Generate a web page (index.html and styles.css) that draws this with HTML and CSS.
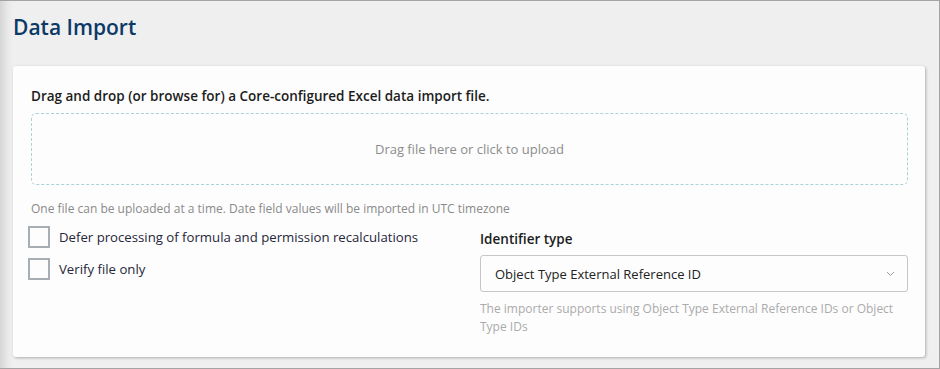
FILE: index.html
```html
<!DOCTYPE html>
<html>
<head>
    <title>Data Import</title>
    <meta name="viewport" content="width=device-width, initial-scale=1">
    <link rel="stylesheet" href="styles.css">
</head>
<body>
    <div class="window">
        <h1>Data Import</h1>

        <div class="card">
            <label class="field-label">Drag and drop (or browse for) a Core-configured Excel data import file.</label>
            <div class="dropzone">Drag file here or click to upload</div>
            <div class="hint">One file can be uploaded at a time. Date field values will be imported in UTC timezone</div>

            <div class="options">
                <div class="checks">
                    <label class="check"><span class="box"></span>Defer processing of formula and permission recalculations</label>
                    <label class="check"><span class="box"></span>Verify file only</label>
                </div>
                <div class="identifier">
                    <label class="field-label">Identifier type</label>
                    <div class="select">
                        <span>Object Type External Reference ID</span>
                        <svg class="chevron" width="9" height="6" viewBox="0 0 9 6"><path d="M1 1l3.5 3.5L8 1" fill="none" stroke="#a0a0a0" stroke-width="1"/></svg>
                    </div>
                    <div class="help">The importer supports using Object Type External Reference IDs or Object Type IDs</div>
                </div>
            </div>
        </div>
    </div>
</body>
</html>
```

FILE: styles.css
```css
html, body {
    margin: 0;
    padding: 0;
}
body {
    font-family: "Open Sans", Lato, sans-serif;
    background: #efefef;
}
.window {
    box-sizing: border-box;
    height: 369px;
    border: 1px solid #a4a4a4;
    border-left: none;
    padding: 0 14px 0 13px;
    background: linear-gradient(to right, #d6d6d6 0, #e9e9e9 8px, #efefef 13px);
}
h1 {
    margin: 0;
    padding: 12px 0 0;
    height: 65px;
    box-sizing: border-box;
    font-size: 21px;
    line-height: 28px;
    font-weight: 600;
    color: #0c3966;
}
.card {
    background: #fdfdfd;
    border-radius: 3px;
    box-shadow: 1px 1px 3px rgba(0,0,0,0.28);
    padding: 21px 17px 23px 18px;
    height: 291px;
    box-sizing: border-box;
}
.field-label {
    display: block;
    font-size: 13.5px;
    line-height: 18px;
    font-weight: 600;
    color: #1c1c1c;
}
.dropzone {
    margin-top: 8px;
    height: 72px;
    box-sizing: border-box;
    border: 1px dashed #a9d3d4;
    border-radius: 5px;
    display: flex;
    align-items: center;
    justify-content: center;
    font-size: 13px;
    color: #8c8c8c;
}
.hint {
    margin-top: 16px;
    font-size: 12px;
    line-height: 16px;
    color: #8a8a8a;
}
.options {
    display: grid;
    grid-template-columns: 1fr 428px;
    gap: 18px;
    margin-top: 9px;
}
.checks {
    display: flex;
    flex-direction: column;
    gap: 10px;
    margin-left: -3px;
}
.check {
    display: flex;
    align-items: center;
    font-size: 13.2px;
    color: #26263a;
    height: 22px;
}
.box {
    width: 22px;
    height: 22px;
    box-sizing: border-box;
    border: 2px solid #a6adb3;
    margin-right: 9px;
    flex-shrink: 0;
}
.identifier {
    padding-top: 4px;
}
.select {
    margin-top: 7px;
    height: 37px;
    box-sizing: border-box;
    border: 1px solid #c6c6c6;
    border-radius: 3px;
    display: flex;
    align-items: center;
    justify-content: space-between;
    padding: 0 12px 0 14px;
    font-size: 13px;
    color: #222;
}
.help {
    margin-top: 8px;
    padding-right: 10px;
    font-size: 12px;
    line-height: 18px;
    color: #ababab;
}
```
